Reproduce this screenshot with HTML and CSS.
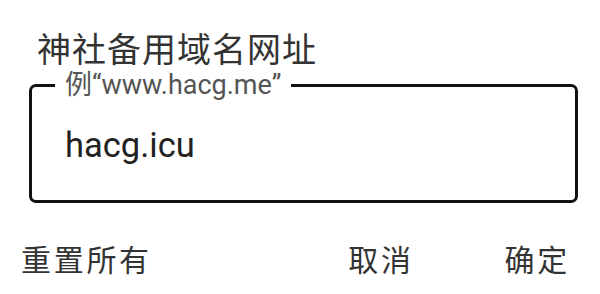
FILE: index.html
```html
<!DOCTYPE html>
<html lang="zh-CN">
<head>
    <meta charset="UTF-8">
    <meta name="viewport" content="width=device-width, initial-scale=1.0">
    <title>神社备用域名网址</title>
    <link rel="stylesheet" href="styles.css">
</head>
<body>
    <div class="dialog">
        <h2 class="dialog-title">神社备用域名网址</h2>
        <fieldset class="outlined-field">
            <legend>例“www.hacg.me”</legend>
            <input type="text" id="domain" value="hacg.icu">
        </fieldset>
        <div class="dialog-buttons">
            <button class="reset-all">重置所有</button>
            <span class="spacer"></span>
            <button class="cancel">取消</button>
            <button class="confirm">确定</button>
        </div>
    </div>
</body>
</html>
```

FILE: styles.css
```css
body { margin: 0; background: #fff; font-family: "Roboto", "Noto Sans CJK SC", sans-serif; }
.dialog { width: 600px; height: 294px; overflow: hidden; }
.dialog-title { margin: 0; padding: 28px 0 0 37px; font-family: "Noto Sans CJK SC", sans-serif; font-size: 34px; font-weight: normal; line-height: 40px; letter-spacing: 1px; color: #333; }
.outlined-field { margin: 4px 22px 0 29px; padding: 0 0 35px 0; border: 3px solid #111; border-radius: 7px; }
.outlined-field legend { margin-left: 23px; padding: 0 10px; font-size: 27px; line-height: 26px; color: #555; }
.outlined-field input { display: block; width: 100%; box-sizing: border-box; margin-top: 27px; padding: 0 0 0 33px; border: none; outline: none; background: transparent; font-family: "Roboto", sans-serif; font-size: 34.5px; line-height: 40px; height: 40px; color: #222; }
.dialog-buttons { display: flex; align-items: center; margin-top: 40px; padding: 0 30px 0 21px; }
.dialog-buttons button { padding: 0; margin: 0; border: none; background: none; font-family: "Noto Sans CJK SC", sans-serif; font-size: 30px; line-height: 30px; letter-spacing: 2.7px; color: #333; cursor: pointer; }
.spacer { flex: 1; }
.cancel { margin-right: 91px !important; }
```
